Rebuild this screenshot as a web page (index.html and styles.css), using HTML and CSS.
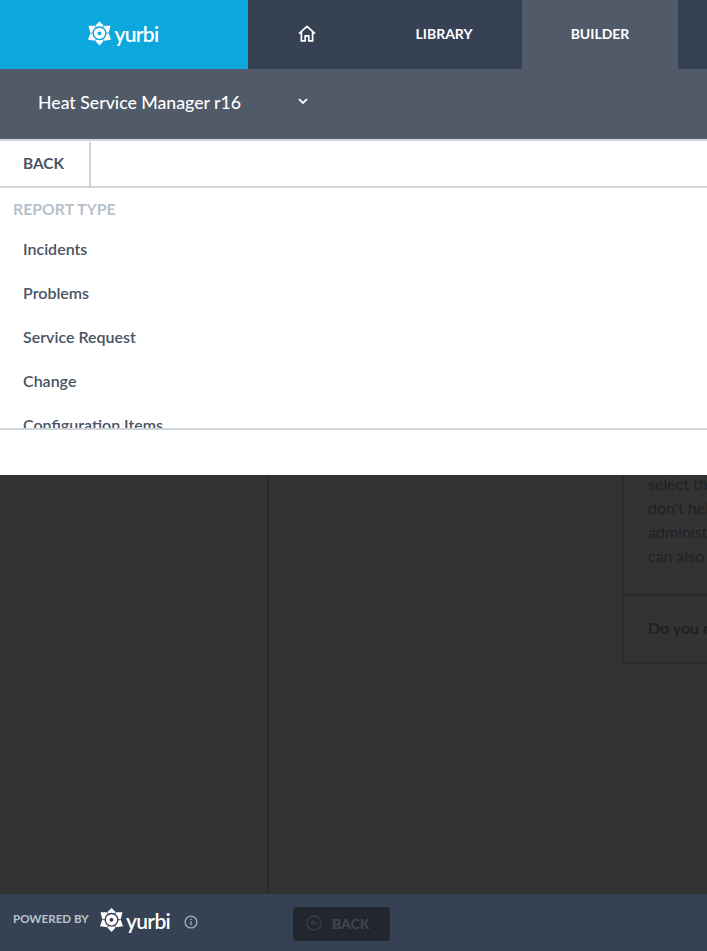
FILE: index.html
```html
<!DOCTYPE html>
<html lang="en">
<head>
<meta charset="utf-8">
<title>Yurbi Builder</title>
<link rel="stylesheet" href="styles.css">
</head>
<body>
<svg class="defs" width="0" height="0" aria-hidden="true">
  <symbol id="mark" viewBox="0 0 24 26">
    <polygon class="mark-fill" points="12,0.5 16.5,5 23.5,5 21.5,12.5 24,19.5 16.5,20.5 12,25.5 7.5,20.5 0,19.5 2.5,12.5 0.5,5 7.5,5"/>
    <path class="mark-cut" d="M7.5 5 L9.5 8 M16.5 5 L14.5 8 M2.5 12.5 L5.5 12.8 M21.5 12.5 L18.5 12.8 M7.5 20.5 L9.5 18 M16.5 20.5 L14.5 18"/>
    <circle class="mark-ring" cx="12" cy="12.8" r="6.6"/>
    <polygon class="mark-core" points="12,8.4 15.8,10.6 15.8,15 12,17.2 8.2,15 8.2,10.6"/>
    <polygon class="mark-hole" points="12,10.6 13.9,11.7 13.9,13.9 12,15 10.1,13.9 10.1,11.7"/>
  </symbol>
</svg>

<header class="topbar">
  <a class="brand">
    <svg class="mark"><use href="#mark"/></svg>
    <span class="wordmark">yurbi</span>
  </a>
  <nav class="nav">
    <a class="nav-item nav-home">
      <svg class="home-icon" viewBox="0 0 18 17"><path d="M1 8.6 L9 1.4 L17 8.6 M3.4 7 V15.8 H7.2 V10.8 H10.8 V15.8 H14.6 V7"/></svg>
    </a>
    <a class="nav-item">LIBRARY</a>
    <a class="nav-item nav-active">BUILDER</a>
  </nav>
</header>

<section class="subbar">
  <span class="subbar-title">Heat Service Manager r16</span>
  <svg class="chevron" viewBox="0 0 10 7"><path d="M1 1.2 L5 5 L9 1.2"/></svg>
</section>

<section class="panel">
  <div class="panel-head">
    <a class="panel-back">BACK</a>
  </div>
  <div class="panel-body">
    <h2 class="panel-label">REPORT TYPE</h2>
    <ul class="type-list">
      <li>Incidents</li>
      <li>Problems</li>
      <li>Service Request</li>
      <li>Change</li>
      <li>Configuration Items</li>
    </ul>
  </div>
  <div class="panel-foot"></div>
</section>

<main class="workspace">
  <aside class="side"></aside>
  <div class="content">
    <div class="help-card">
      <div class="help-text">
        <p>select the</p>
        <p>don't help</p>
        <p>administrator</p>
        <p>can also</p>
      </div>
      <div class="help-foot">Do you need</div>
    </div>
  </div>
</main>

<footer class="footer">
  <span class="powered">POWERED BY</span>
  <span class="footer-logo">
    <svg class="mark mark-foot"><use href="#mark"/></svg>
    <span class="wordmark wordmark-foot">yurbi</span>
  </span>
  <svg class="info" viewBox="0 0 14 14"><circle cx="7" cy="7" r="5.9"/><path d="M7 6.2 V10.2 M7 3.6 V5"/></svg>
  <button class="back-btn" type="button">
    <svg class="back-icon" viewBox="0 0 16 16"><circle cx="8" cy="8" r="7"/><path d="M11.5 8 H5 M7.6 5.4 L5 8 L7.6 10.6"/></svg>
    BACK
  </button>
</footer>
</body>
</html>
```
FILE: styles.css
```css
* { box-sizing: border-box; }
html, body { height: 100%; }
body {
  margin: 0;
  width: 707px;
  height: 951px;
  overflow: hidden;
  display: flex;
  flex-direction: column;
  background: #333;
  font-family: "Lato", "Liberation Sans", sans-serif;
}
.defs { position: absolute; }

.topbar { display: flex; height: 69px; background: #364154; flex: none; }
.brand {
  width: 248px;
  background: #0ca7dc;
  color: #0ca7dc;
  display: flex;
  align-items: center;
  justify-content: center;
  gap: 3px;
  padding-right: 1px;
  padding-bottom: 3px;
}
.mark { width: 23px; height: 25px; flex: none; }
.mark-fill, .mark-core { fill: #fff; }
.mark-hole { fill: currentColor; }
.mark-ring { fill: none; stroke: currentColor; stroke-width: 1.4; }
.mark-cut { fill: none; stroke: currentColor; stroke-width: 1; }
.wordmark {
  font-family: "Lato", sans-serif;
  font-size: 21px;
  font-weight: 600;
  line-height: 25px;
  letter-spacing: -0.7px;
  color: #fff;
}
.nav { display: flex; }
.nav-item {
  width: 156px;
  display: flex;
  align-items: center;
  justify-content: center;
  color: #fff;
  font-size: 14px;
  font-weight: 700;
  padding-bottom: 3px;
}
.nav-home { width: 118px; }
.nav-active { background: #505a69; }
.home-icon {
  width: 18px;
  height: 17px;
  fill: none;
  stroke: #fff;
  stroke-width: 1.7;
}

.subbar {
  height: 70px;
  flex: none;
  background: #505a69;
  display: flex;
  align-items: center;
  padding-left: 38px;
  padding-bottom: 3px;
}
.subbar-title {
  width: 260px;
  color: #fff;
  font-size: 17.7px;
  font-weight: 500;
}
.chevron {
  width: 10px;
  height: 7px;
  fill: none;
  stroke: #fff;
  stroke-width: 1.8;
  margin-bottom: 3px;
}

.panel {
  height: 336px;
  flex: none;
  background: #fff;
  border-top: 2px solid #d0d5dc;
  display: flex;
  flex-direction: column;
}
.panel-head {
  height: 47px;
  flex: none;
  border-bottom: 2px solid #d0d5dc;
  display: flex;
  padding-top: 1px;
}
.panel-back {
  width: 91px;
  border-right: 2px solid #d0d5dc;
  padding-left: 23px;
  color: #4a5364;
  font-size: 15.4px;
  font-weight: 700;
  line-height: 43px;
}
.panel-body {
  height: 240px;
  flex: none;
  overflow: hidden;
  padding: 11px 0 0 13px;
}
.panel-label {
  margin: 0;
  color: #b8bfc9;
  font-size: 15.8px;
  font-weight: 700;
  line-height: 20px;
}
.type-list {
  list-style: none;
  margin: 19px 0 0;
  padding: 0 0 0 10px;
}
.type-list li {
  height: 44px;
  color: #4a5364;
  font-size: 16px;
  font-weight: 600;
  line-height: 22px;
}
.panel-foot { flex: 1; border-top: 2px solid #d0d5dc; }

.workspace { flex: 1; display: flex; min-height: 0; }
.side { width: 269px; flex: none; border-right: 2px solid #2b2b2b; }
.content { flex: 1; padding-left: 354px; min-width: 0; overflow: hidden; }
.help-card {
  margin-left: -1px;
  height: 189px;
  border: 2px solid #2b2b2b;
  border-top: 0;
  border-right: 0;
  border-radius: 0 0 0 3px;
  color: #1f2125;
  white-space: nowrap;
  overflow: hidden;
}
.help-text {
  height: 124px;
  padding: 0 0 0 24px;
  border-bottom: 2px solid #2b2b2b;
  font-size: 16px;
  line-height: 24px;
  margin-top: -3px;
}
.help-text p { margin: 0; }
.help-foot {
  padding: 22px 0 0 24px;
  font-size: 16px;
  font-weight: 700;
  line-height: 20px;
}

.footer {
  height: 57px;
  flex: none;
  background: #364154;
  color: #364154;
  display: flex;
  align-items: center;
  padding-left: 13px;
}
.powered {
  width: 87px;
  color: #b9c3cf;
  font-size: 11.6px;
  font-weight: 700;
  padding-bottom: 9px;
}
.footer-logo {
  display: flex;
  align-items: center;
  gap: 3px;
  width: 84px;
  padding-bottom: 5px;
}
.mark-foot { width: 23px; height: 26px; }
.info {
  width: 14px;
  height: 14px;
  fill: none;
  stroke: #a9b0ba;
  stroke-width: 1.3;
  margin-bottom: 2px;
}
.back-btn {
  margin-left: 95px;
  margin-top: 3px;
  width: 97px;
  height: 34px;
  border: 0;
  border-radius: 4px;
  background: #22272f;
  color: #43474d;
  font-family: inherit;
  font-size: 14px;
  font-weight: 700;
  display: flex;
  align-items: center;
  gap: 10px;
  padding: 0 0 2px 13px;
}
.back-icon {
  width: 16px;
  height: 16px;
  fill: none;
  stroke: #383c42;
  stroke-width: 1.3;
}
```
